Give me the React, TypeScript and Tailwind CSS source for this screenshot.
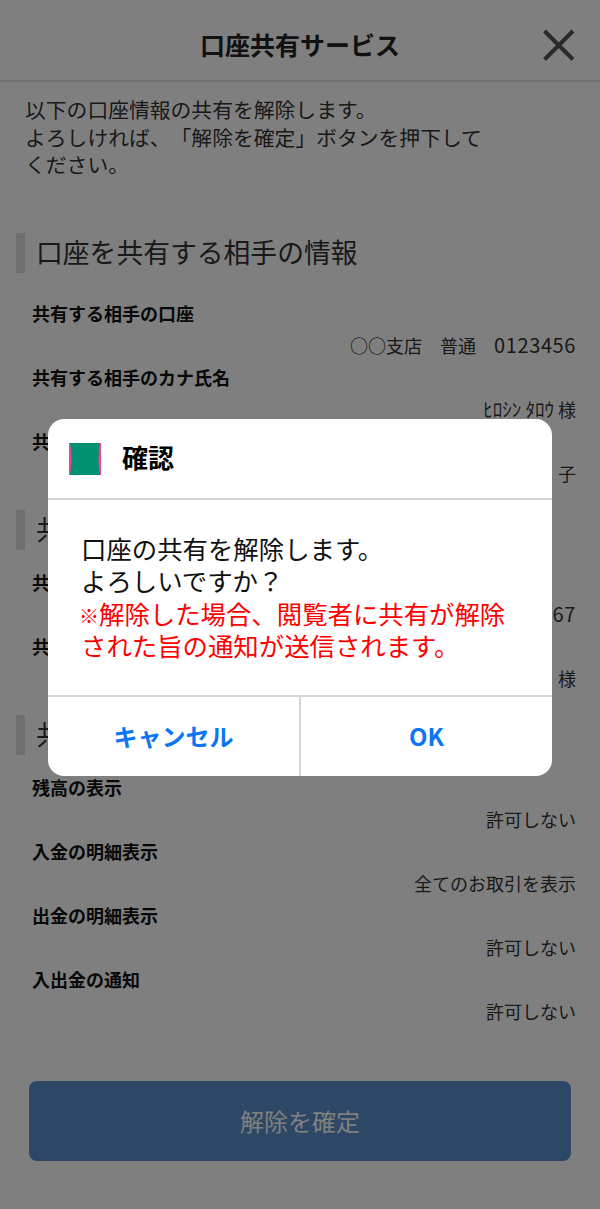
import type { ReactNode } from 'react';

const font = { fontFamily: '"Noto Sans CJK JP", "Noto Sans", sans-serif' };

function Row({ label, value }: { label: string; value: ReactNode }) {
  return (
    <div className="pl-4 pr-[24px]">
      <div className="h-8 text-[18px] leading-[32px] font-bold text-[#111111]">{label}</div>
      <div className="h-8 text-right text-[18px] leading-[32px] text-[#333333]">{value}</div>
    </div>
  );
}

function Section({ title, rows, tight }: { title: string; rows: [string, ReactNode][]; tight?: boolean }) {
  return (
    <section className="pl-4">
      <h2 className="h-10 border-l-[9px] border-[#dedede] pl-[11px] text-[26.8px] leading-[37px] text-[#333333]">{title}</h2>
      <div className={tight ? 'mt-[16px]' : 'mt-[24px]'}>
        {rows.map(([l, v]) => (
          <Row key={l} label={l} value={v} />
        ))}
      </div>
    </section>
  );
}

function Digits({ children }: { children: string }) {
  return <span className="text-[20px] leading-[0] tracking-[0.6px]">{children}</span>;
}

export default function App() {
  return (
    <div style={font} className="relative h-[1209px] w-[600px] overflow-hidden bg-white [text-spacing-trim:space-all]">
      <header className="relative flex h-[82px] items-center justify-center border-b-2 border-[#e2e2e2]">
        <h1 className="mt-[7px] text-[25px] leading-[36px] font-bold text-[#222222]">口座共有サービス</h1>
        <svg className="absolute left-[541px] top-[27px]" width="36" height="36" viewBox="0 0 36 36" fill="none">
          <path d="M3.5 4 L32 32.5 M32 4 L3.5 32.5" stroke="#555555" strokeWidth="4" />
        </svg>
      </header>
      <p className="mt-[14px] w-[490px] pl-[25px] text-[20.8px] leading-[27.5px] text-[#333333]">
        以下の口座情報の共有を解除します。<br />よろしければ、「解除を確定」ボタンを押下してください。
      </p>
      <div className="mt-[54px] flex flex-col gap-[21px]">
        <Section
          title="口座を共有する相手の情報"
          rows={[
            ['共有する相手の口座', <>○○支店　普通　<Digits>0123456</Digits></>],
            ['共有する相手のカナ氏名', <><span className="text-[19px] leading-[0]">ﾋﾛｼﾝ ﾀﾛｳ</span> 様</>],
            ['共有する相手の漢字氏名', '広進　花　子'],
          ]}
        />
        <Section
          tight
          title="共有する自分の情報"
          rows={[
            ['共有する自分の口座', <>○○支店　普通　<Digits>1234567</Digits></>],
            ['共有する自分のカナ氏名', 'ｺｳｼﾝ ﾊﾅｺ　様'],
          ]}
        />
        <Section
          tight
          title="共有するサービス"
          rows={[
            ['残高の表示', '許可しない'],
            ['入金の明細表示', '全てのお取引を表示'],
            ['出金の明細表示', '許可しない'],
            ['入出金の通知', '許可しない'],
          ]}
        />
      </div>
      <div className="mx-[29px] mt-[54px] flex h-[80px] items-center justify-center rounded-lg bg-[#5a90cc] text-[24px] text-[#ffffff]">
        解除を確定
      </div>

      <div className="absolute inset-0 bg-black/50" />

      <div className="absolute left-[48px] top-[419px] w-[504px] overflow-hidden rounded-[16px] bg-white">
        <div className="flex h-[81px] items-center gap-[21px] border-b-2 border-[#d4d4d4] pl-[21px]">
          <svg width="32" height="32" viewBox="0 0 32 32">
            <rect width="32" height="32" fill="#f0449a" />
            <path d="M1 0 H31 Q28 16 31 32 H1 Q4 16 1 0 Z" fill="#039271" />
          </svg>
          <span className="-mt-[3px] text-[26px] leading-[36px] font-bold text-black">確認</span>
        </div>
        <div className="h-[195px] pt-[32px] pr-[38px] pl-[33px] text-[25.4px] leading-[32.3px] text-[#111111]">
          <div>口座の共有を解除します。</div>
          <div>よろしいですか？</div>
          <div className="text-[#ff0000]">
            <span className="-ml-[2px] text-[20px] leading-[0] font-bold">※</span>解除した場合、閲覧者に共有が解除された旨の通知が送信されます。
          </div>
        </div>
        <div className="flex h-[81px] border-t-2 border-[#d4d4d4]">
          <button className="flex-1 border-r-2 border-[#d4d4d4] pb-[2px] text-[24px] font-bold text-[#0a75f5]">キャンセル</button>
          <button className="flex-1 pb-[2px] text-[24px] font-bold text-[#0a75f5]">OK</button>
        </div>
      </div>
    </div>
  );
}
